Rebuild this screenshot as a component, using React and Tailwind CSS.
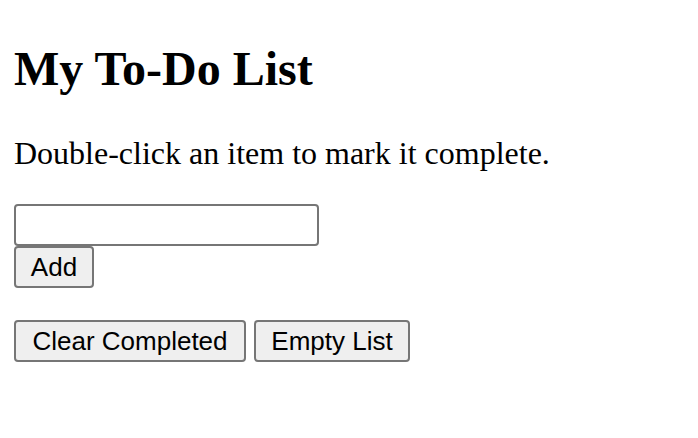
import React, { useState } from "react";

const App = () => {
  const [text, setText] = useState("");
  const [items, setItems] = useState([]);

  const addItem = () => {
    if (text.trim()) {
      setItems([...items, { id: Date.now(), name: text.trim(), done: false }]);
      setText("");
    }
  };

  const toggleItem = (id) => {
    setItems(items.map((it) => (it.id === id ? { ...it, done: !it.done } : it)));
  };

  const btn =
    "h-[42px] bg-[#efefef] border-2 border-[#767676] rounded-[4px] text-[26px] leading-none text-black text-center font-['Liberation_Sans',Arial,sans-serif] hover:bg-[#e5e5e5]";

  return (
    <div className="min-h-screen bg-white px-[14px] pt-[14px] text-black font-['Liberation_Serif','Times_New_Roman',serif]">
      <h1 className="mt-[28px] mb-[39px] text-[48px] leading-[54px] font-bold">
        My To-Do List
      </h1>
      <p className="text-[32px] leading-[37px]">
        Double-click an item to mark it complete.
      </p>
      <div className="mt-[32px] flex flex-col items-start">
        <input
          type="text"
          value={text}
          onChange={(e) => setText(e.target.value)}
          onKeyDown={(e) => e.key === "Enter" && addItem()}
          className="w-[305px] h-[42px] border-2 border-[#767676] rounded-[4px] px-2 text-[24px] font-['Liberation_Sans',Arial,sans-serif] outline-none"
        />
        <button className={`${btn} w-[80px]`} onClick={addItem}>
          Add
        </button>
      </div>
      {items.length > 0 && (
        <ul className="mt-4 ml-10 list-disc text-[28px]">
          {items.map((it) => (
            <li
              key={it.id}
              onDoubleClick={() => toggleItem(it.id)}
              className={it.done ? "line-through" : ""}
            >
              {it.name}
            </li>
          ))}
        </ul>
      )}
      <div className="mt-[32px] flex gap-[8px]">
        <button
          className={`${btn} w-[232px]`}
          onClick={() => setItems(items.filter((it) => !it.done))}
        >
          Clear Completed
        </button>
        <button className={`${btn} w-[156px]`} onClick={() => setItems([])}>
          Empty List
        </button>
      </div>
    </div>
  );
};

export default App;
